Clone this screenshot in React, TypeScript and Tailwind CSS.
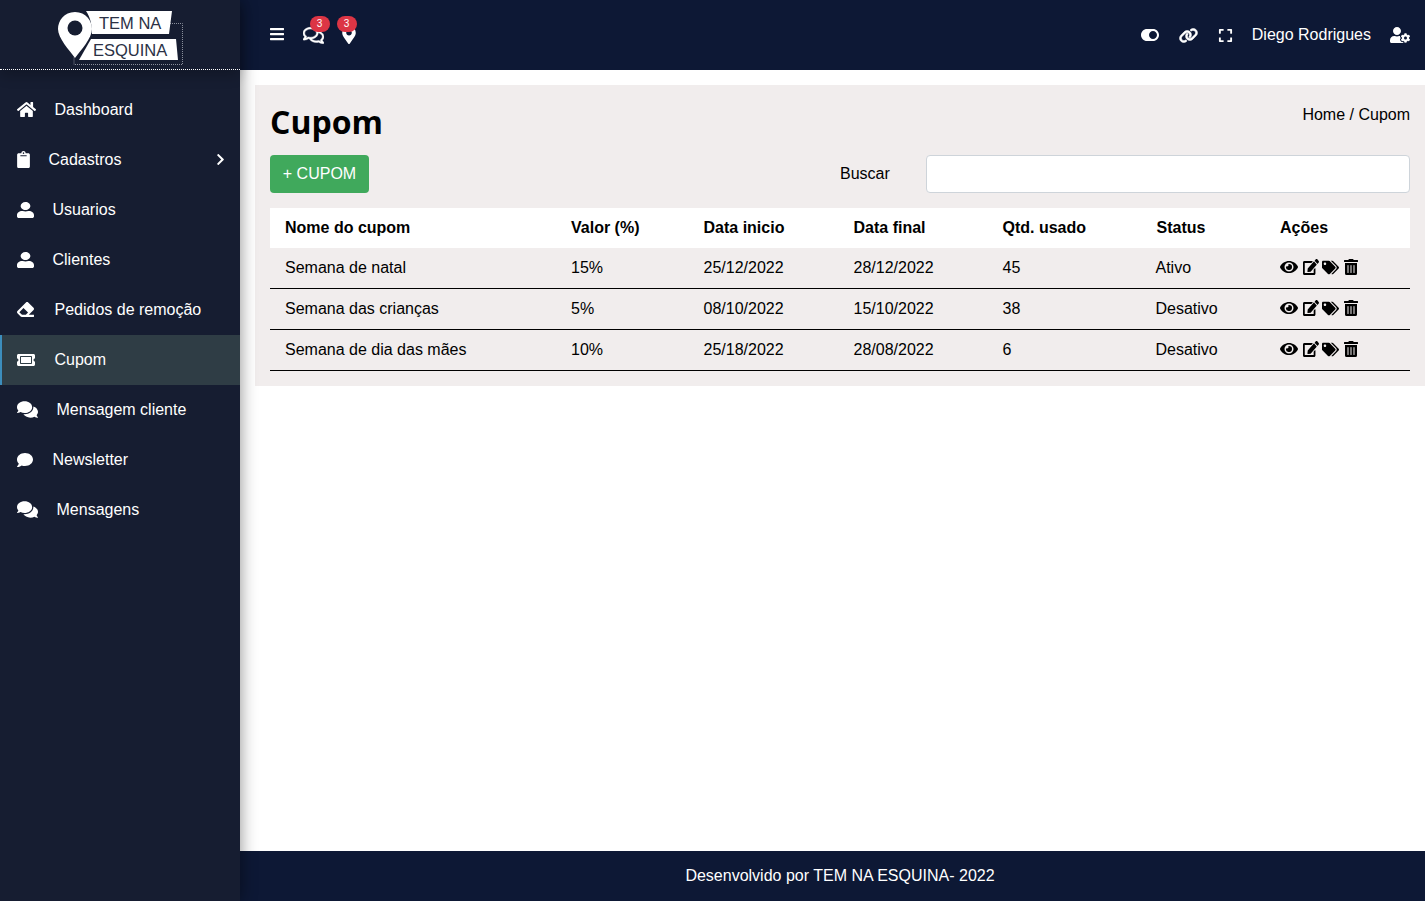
import React from "react";
import { FaHome, FaClipboard, FaUser, FaEraser, FaTicketAlt, FaComments, FaComment, FaChevronRight, FaBars, FaRegComments, FaMapMarkerAlt, FaToggleOn, FaExpand, FaUserCog, FaEye, FaEdit, FaTags, FaTrashAlt } from "react-icons/fa";
import { FaLink } from "react-icons/fa6";

const nav = [
  { icon: <FaHome size={19} />, label: "Dashboard", gap: "pl-[54.5px]" },
  { icon: <FaClipboard size={17} className="-ml-[2px]" />, label: "Cadastros", gap: "pl-[48.5px]", arrow: true },
  { icon: <FaUser className="h-[16px] w-[17px]" preserveAspectRatio="none" />, label: "Usuarios", gap: "pl-[52.5px]" },
  { icon: <FaUser className="h-[16px] w-[17px]" preserveAspectRatio="none" />, label: "Clientes", gap: "pl-[52.5px]" },
  { icon: <FaEraser size={17} />, label: "Pedidos de remoção", gap: "pl-[54.5px]" },
  { icon: <FaTicketAlt size={18} />, label: "Cupom", gap: "pl-[54.5px]", active: true },
  { icon: <FaComments size={21} />, label: "Mensagem cliente", gap: "pl-[56.5px]" },
  { icon: <FaComment size={16} />, label: "Newsletter", gap: "pl-[52.5px]" },
  { icon: <FaComments size={21} />, label: "Mensagens", gap: "pl-[56.5px]" },
];

const rows = [
  ["Semana de natal", "15%", "25/12/2022", "28/12/2022", "45", "Ativo"],
  ["Semana das crianças", "5%", "08/10/2022", "15/10/2022", "38", "Desativo"],
  ["Semana de dia das mães", "10%", "25/18/2022", "28/08/2022", "6", "Desativo"],
];

const heads = ["Nome do cupom", "Valor (%)", "Data inicio", "Data final", "Qtd. usado", "Status", "Ações"];

function Logo() {
  return (
    <svg width="130" height="66" viewBox="0 0 130 66" className="block">
      <path d="M20 57.5 V64.5 H128.5 V23.5 H116" fill="none" stroke="#8a8f9c" strokeWidth="1" strokeDasharray="1 1" />
      <path d="M32 11 H118 L115 34 H38 C38 24 36 17 32 11 Z" fill="#fff" />
      <path d="M37 39 H122 L124 60 H25 Z" fill="#fff" />
      <path d="M21 12 C10 12 4 21 4 29 C4 38 15 50 21 58 C27 50 38 38 38 29 C38 21 32 12 21 12 Z" fill="#fff" />
      <circle cx="21" cy="28" r="7.5" fill="#161d31" />
      <text x="45" y="28.5" fontFamily="Liberation Sans, sans-serif" fontSize="16.5" fill="#2b3145">TEM NA</text>
      <text x="39" y="56" fontFamily="Liberation Sans, sans-serif" fontSize="16.5" fill="#2b3145">ESQUINA</text>
    </svg>
  );
}

export default function App() {
  return (
    <div className="flex h-screen w-full overflow-hidden bg-white font-['Liberation_Sans',Arial,sans-serif] text-[16px] text-black">
      <aside className="z-10 flex h-full w-[240px] shrink-0 flex-col bg-[#161d31] text-white shadow-[0_0_16px_rgba(0,0,0,0.45)]">
        <div className="flex h-[70px] shrink-0 justify-center border-b border-dotted border-white pr-[3px] shadow-[0_6px_12px_rgba(0,0,0,0.2)]">
          <Logo />
        </div>
        <nav className="pt-[15px]">
          {nav.map((n) => (
            <div key={n.label} className={`relative flex h-[50px] items-center ${n.gap} ${n.active ? "border-l-[2px] border-[#3c8dbc] bg-[#2f3d45]" : ""}`}>
              <span className={`absolute -mt-[1px] flex w-[22px] justify-start ${n.active ? "left-[15px]" : "left-[17px]"}`}>
                {n.icon}
              </span>
              <span className={n.active ? "-ml-[2px]" : ""}>{n.label}</span>
              {n.arrow && <FaChevronRight size={13} className="absolute right-[13px] -mt-[1px]" />}
            </div>
          ))}
        </nav>
      </aside>

      <div className="flex h-full min-w-0 flex-1 flex-col">
        <header className="flex h-[70px] shrink-0 items-center bg-[#0d1835] pl-[30px] pr-[15px] text-white">
          <FaBars size={16} className="-mt-[3px] -ml-[1px]" />
          <span className="relative ml-[17.5px] flex">
            <FaRegComments size={21} stroke="currentColor" strokeWidth={12} />
            <span className="absolute -top-[9px] left-[7px] flex h-[16px] w-[20px] items-center justify-center rounded-full bg-[#dc3545] text-[10px] leading-none">3</span>
          </span>
          <span className="relative ml-[16px] flex">
            <FaMapMarkerAlt size={18} />
            <span className="absolute -top-[10px] -left-[3px] flex h-[16px] w-[20px] items-center justify-center rounded-full bg-[#dc3545] text-[10px] leading-none">3</span>
          </span>
          <div className="ml-auto flex items-center">
            <FaToggleOn size={18} />
            <FaLink size={19} className="ml-[20px]" stroke="currentColor" strokeWidth={20} />
            <FaExpand size={15} className="ml-[20px]" />
            <span className="ml-[18.5px]">Diego Rodrigues</span>
            <FaUserCog size={20} className="ml-[19px]" />
          </div>
        </header>

        <main className="min-h-0 flex-1 pl-[15px] pt-[15px]">
          <section className="bg-[#f1eded] p-[15px]">
            <div className="flex items-start justify-between">
              <h1 className="font-['Open_Sans',sans-serif] text-[32px] font-bold leading-[43px]">Cupom</h1>
              <div className="pt-[5px] leading-[20px]">Home / Cupom</div>
            </div>
            <div className="mt-[12px] flex h-[38px] items-center">
              <button className="h-[38px] w-[99px] rounded-[4px] bg-[#40a95c] text-white">+ CUPOM</button>
              <label className="ml-[471px] w-[86px]">Buscar</label>
              <input className="h-[38px] flex-1 rounded-[4px] border border-[#ced4da] bg-white" />
            </div>
            <table className="mt-[15px] w-full table-fixed border-separate border-spacing-0">
              <colgroup>
                <col className="w-[286px]" />
                <col className="w-[133px]" />
                <col className="w-[150px]" />
                <col className="w-[149px]" />
                <col className="w-[154px]" />
                <col className="w-[123px]" />
                <col />
              </colgroup>
              <thead>
                <tr className="h-[40px] bg-white">
                  {heads.map((h, i) => (
                    <th key={h} className={`text-left font-bold ${i >= 2 && i <= 5 ? "pl-[14.5px]" : "pl-[15px]"}`}>{h}</th>
                  ))}
                </tr>
              </thead>
              <tbody>
                {rows.map((r) => (
                  <tr key={r[0]} className="h-[41px]">
                    {r.map((c, i) => (
                      <td key={i} className={`border-b border-black ${i === 0 || i === 1 ? "pl-[15px]" : i === 5 ? "pl-[13.5px]" : "pl-[14.5px]"}`}>{c}</td>
                    ))}
                    <td className="border-b border-black pl-[15px]">
                      <div className="-mt-[2px] flex items-center">
                        <FaEye size={18} />
                        <FaEdit className="ml-[5px] h-[16px] w-[16px]" preserveAspectRatio="none" />
                        <FaTags size={17} className="ml-[3px]" />
                        <FaTrashAlt size={16} className="ml-[3.5px]" />
                      </div>
                    </td>
                  </tr>
                ))}
              </tbody>
            </table>
          </section>
        </main>

        <footer className="flex h-[50px] shrink-0 items-center justify-center bg-[#0d1835] pl-[15px] text-white">
          Desenvolvido por TEM NA ESQUINA- 2022
        </footer>
      </div>
    </div>
  );
}
